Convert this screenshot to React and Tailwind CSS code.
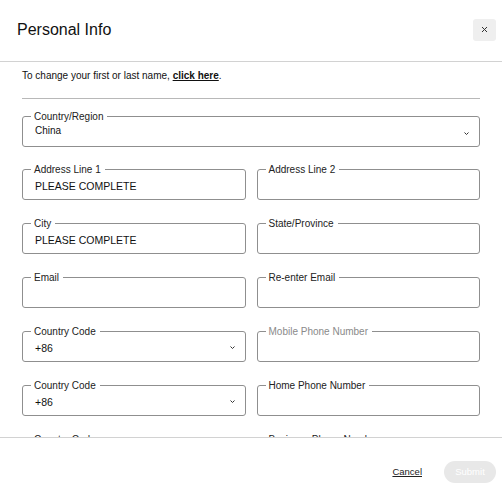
import React from 'react';

const rows = [
  [{ label: 'Address Line 1', value: 'PLEASE COMPLETE' }, { label: 'Address Line 2' }],
  [{ label: 'City', value: 'PLEASE COMPLETE' }, { label: 'State/Province' }],
  [{ label: 'Email' }, { label: 'Re-enter Email' }],
  [{ label: 'Country Code', value: '+86', select: true }, { label: 'Mobile Phone Number', muted: true }],
  [{ label: 'Country Code', value: '+86', select: true }, { label: 'Home Phone Number' }],
  [{ label: 'Country Code', value: '+86', select: true }, { label: 'Business Phone Number' }],
];

function Chevron({ className }) {
  return (
    <svg width="5" height="3" viewBox="0 0 5 3" className={className}>
      <polyline points="0.5,0.5 2.5,2.5 4.5,0.5" fill="none" stroke="#333" strokeWidth="1" />
    </svg>
  );
}

function Field({ label, value, select, muted }) {
  return (
    <fieldset className="border border-[#8f8f8f] rounded-[3px] px-[8px] min-w-0">
      <legend className={`px-[3px] pr-[4px] text-[10px] leading-[13px] ${muted ? 'text-[#8a8a8a]' : 'text-[#222]'}`}>
        {label}
      </legend>
      <div className="h-[23px] flex items-center justify-between pb-[4px] pl-[4px]">
        <span className="text-[10.5px] text-[#111] leading-[14px]">{value}</span>
        {select && <Chevron className="mr-[2px]" />}
      </div>
    </fieldset>
  );
}

export default function App() {
  return (
    <div className="h-[500px] w-[502px] flex flex-col bg-white font-['Liberation_Sans',Arial,sans-serif] overflow-hidden">
      <div className="h-[62px] shrink-0 flex items-center justify-between pl-[17px] pr-[6px] pb-[2px] border-b border-[#d2d2d2]">
        <h2 className="text-[16px] text-[#111]">Personal Info</h2>
        <button className="w-[23px] h-[22px] bg-[#efefef] rounded-[3px] flex items-center justify-center">
          <svg width="7" height="7" viewBox="0 0 7 7">
            <path d="M1 1L6 6M6 1L1 6" stroke="#333" strokeWidth="1" />
          </svg>
        </button>
      </div>

      <div className="flex-1 overflow-hidden px-[22px] pt-[8px]">
        <p className="text-[10px] leading-[12px] text-[#111]">
          To change your first or last name, <span className="font-bold underline">click here</span>.
        </p>
        <div className="mt-[16px] h-px bg-[#b8b8b8]" />

        <div className="mt-[11px]">
          <fieldset className="border border-[#8f8f8f] rounded-[3px] px-[8px]">
            <legend className="px-[3px] pr-[4px] text-[10px] leading-[13px] text-[#222]">Country/Region</legend>
            <div className="h-[23px] flex items-center justify-between pb-[8px] pl-[4px]">
              <span className="text-[10px] text-[#111] leading-[14px]">China</span>
              <Chevron className="mr-[2px] mt-[6px]" />
            </div>
          </fieldset>
        </div>

        <div className="mt-[16px] grid grid-cols-2 gap-x-[11px] gap-y-[17px]">
          {rows.map((row, i) =>
            row.map((f, j) => <Field key={`${i}-${j}`} {...f} />)
          )}
        </div>
      </div>

      <div className="h-[63px] shrink-0 border-t border-[#d2d2d2] flex items-center justify-end pr-[6px] pt-[6px] gap-[22px]">
        <button className="text-[9.5px] text-[#222] underline">Cancel</button>
        <button className="w-[52px] h-[22px] rounded-full bg-[#e8e8e8] text-white text-[9.5px]">Submit</button>
      </div>
    </div>
  );
}
